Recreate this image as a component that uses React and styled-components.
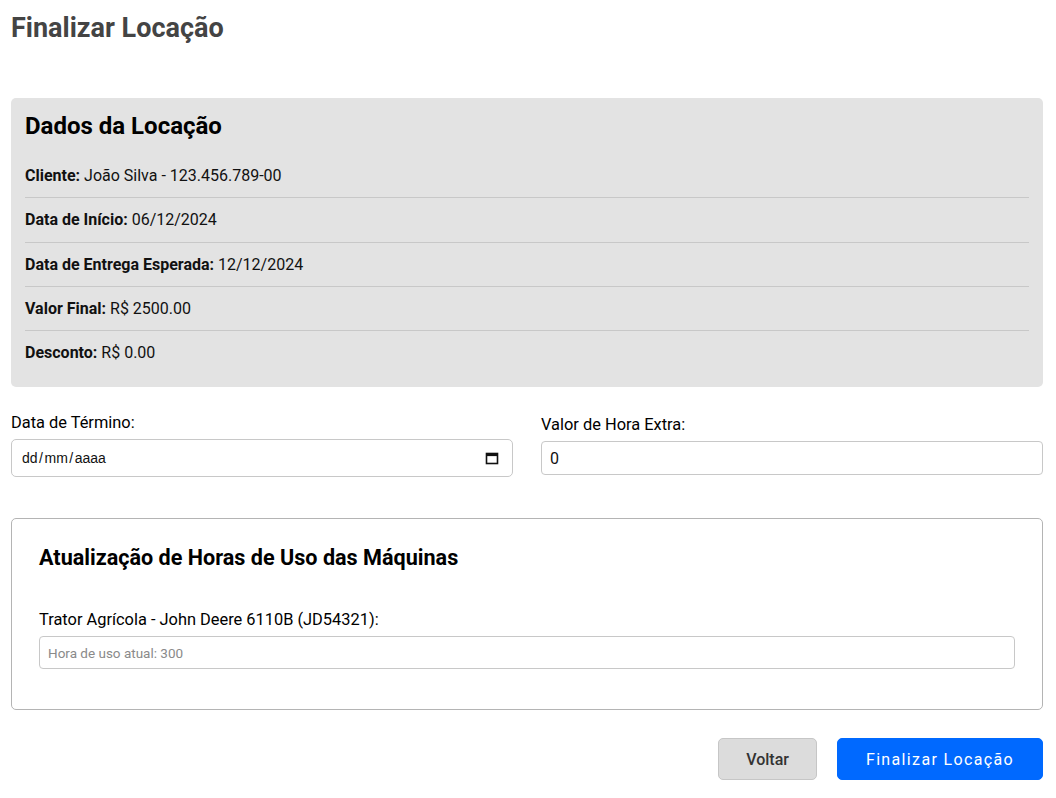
import React from "react";
import styled, { createGlobalStyle } from "styled-components";

const GlobalStyle = createGlobalStyle`
  body {
    margin: 0;
    background: #fff;
    font-family: Roboto, "Liberation Sans", Arial, sans-serif;
    color: #111;
  }
`;

const rows = [
  { label: "Cliente:", value: "João Silva - 123.456.789-00" },
  { label: "Data de Início:", value: "06/12/2024" },
  { label: "Data de Entrega Esperada:", value: "12/12/2024" },
  { label: "Valor Final:", value: "R$ 2500.00" },
  { label: "Desconto:", value: "R$ 0.00" },
];

export default function App() {
  return (
    <Page>
      <GlobalStyle />
      <Title>Finalizar Locação</Title>

      <InfoCard>
        <CardTitle>Dados da Locação</CardTitle>
        {rows.map((r) => (
          <InfoRow key={r.label}>
            <strong>{r.label}</strong> {r.value}
          </InfoRow>
        ))}
      </InfoCard>

      <FormRow>
        <Field>
          <Label>Data de Término:</Label>
          <DateBox>
            <DateText>
              dd<Slash>/</Slash>mm<Slash>/</Slash>aaaa
            </DateText>
            <svg width="14" height="14" viewBox="0 0 14 14">
              <rect x="1.5" y="2.5" width="11" height="10" fill="none" stroke="#111" strokeWidth="1.6" />
              <rect x="1.5" y="2.5" width="11" height="2.6" fill="#111" />
            </svg>
          </DateBox>
        </Field>
        <Field>
          <Label>Valor de Hora Extra:</Label>
          <TextInput defaultValue="0" size="16px" />
        </Field>
      </FormRow>

      <MachineBox>
        <SectionTitle>Atualização de Horas de Uso das Máquinas</SectionTitle>
        <Label>Trator Agrícola - John Deere 6110B (JD54321):</Label>
        <TextInput placeholder="Hora de uso atual: 300" />
      </MachineBox>

      <Actions>
        <Button>Voltar</Button>
        <Button primary>Finalizar Locação</Button>
      </Actions>
    </Page>
  );
}

const Page = styled.div`
  padding: 0 13px 20px 11px;
`;

const Title = styled.h1`
  margin: 0;
  padding-top: 12px;
  font-size: 27px;
  line-height: 32px;
  font-weight: 700;
  color: #444;
`;

const InfoCard = styled.div`
  margin-top: 54px;
  background: #e3e3e3;
  border-radius: 5px;
  padding: 14px 14px 13px;
`;

const CardTitle = styled.h2`
  margin: 0 0 14px;
  font-size: 24px;
  line-height: 28px;
  font-weight: 700;
  color: #000;
`;

const InfoRow = styled.div`
  padding: 12px 0;
  font-size: 16px;
  line-height: 19.3px;
  border-bottom: 1px solid #c8c8c8;
  &:last-child {
    border-bottom: none;
  }
  strong {
    font-weight: 700;
  }
`;

const FormRow = styled.div`
  display: grid;
  grid-template-columns: 1fr 1fr;
  column-gap: 28px;
  align-items: center;
  margin-top: 26px;
`;

const Field = styled.div`
  display: flex;
  flex-direction: column;
  gap: 7px;
`;

const Label = styled.label`
  font-size: 16.4px;
  line-height: 19px;
  font-weight: 400;
  color: #000;
`;

const DateBox = styled.div`
  display: flex;
  align-items: center;
  justify-content: space-between;
  height: 38px;
  box-sizing: border-box;
  padding: 0 13px 0 10px;
  border: 1px solid #c8c8c8;
  border-radius: 5px;
  background: #fff;
`;

const DateText = styled.span`
  font-family: "Liberation Sans", Arial, sans-serif;
  font-size: 14px;
  color: #111;
`;

const Slash = styled.span`
  margin: 0 1.5px;
`;

const TextInput = styled.input`
  box-sizing: border-box;
  width: 100%;
  height: 34px;
  padding: 0 8px;
  border: 1px solid #c8c8c8;
  border-radius: 4px;
  font-family: Roboto, "Liberation Sans", Arial, sans-serif;
  font-size: ${(p) => p.size || "13.5px"};
  color: #111;
  background: #fff;
  &::placeholder {
    color: #8a8a8a;
  }
`;

const MachineBox = styled.div`
  margin-top: 41px;
  border: 1px solid #b4b4b4;
  border-radius: 5px;
  padding: 26px 27px 40px 27px;
  display: flex;
  flex-direction: column;
  label {
    margin-bottom: 7px;
  }
  input {
    height: 33px;
  }
`;

const SectionTitle = styled.h3`
  margin: 0 0 39px;
  font-size: 21.6px;
  line-height: 26px;
  font-weight: 700;
  color: #000;
`;

const Actions = styled.div`
  display: flex;
  justify-content: flex-end;
  gap: 20px;
  margin-top: 28px;
`;

const Button = styled.button`
  height: 42px;
  border-radius: 5px;
  font-family: Roboto, "Liberation Sans", Arial, sans-serif;
  font-size: 16px;
  cursor: pointer;
  padding: ${(p) => (p.primary ? "0 28px" : "0 27px")};
  border: 1px solid ${(p) => (p.primary ? "#0069ff" : "#c6c6c6")};
  background: ${(p) => (p.primary ? "#0069ff" : "#dcdcdc")};
  color: ${(p) => (p.primary ? "#fff" : "#333")};
  font-weight: ${(p) => (p.primary ? 400 : 500)};
  letter-spacing: ${(p) => (p.primary ? "1.35px" : "0")};
`;
